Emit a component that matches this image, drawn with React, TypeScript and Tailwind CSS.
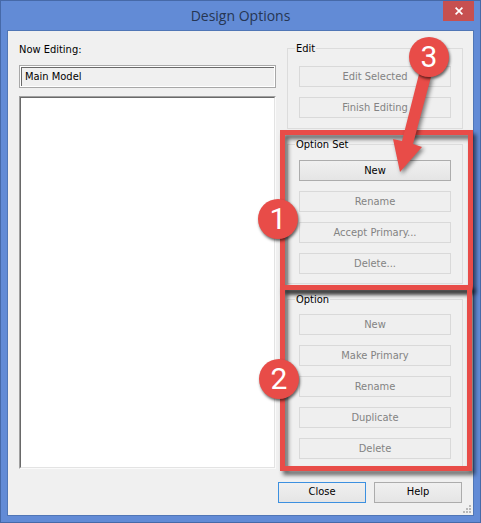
import React, { useState } from "react";
import clsx from "clsx";

interface Action {
    label: string;
    enabled?: boolean;
}

const editActions: Action[] = [{ label: "Edit Selected" }, { label: "Finish Editing" }];

const optionSetActions: Action[] = [
    { label: "New", enabled: true },
    { label: "Rename" },
    { label: "Accept Primary..." },
    { label: "Delete..." },
];

const optionActions: Action[] = [
    { label: "New" },
    { label: "Make Primary" },
    { label: "Rename" },
    { label: "Duplicate" },
    { label: "Delete" },
];

function ActionGroup({ title, actions, className, children }: { title: string; actions: Action[]; className?: string; children?: React.ReactNode }) {
    return (
        <div className="relative">
            <fieldset className={clsx("min-w-0 border border-[#dcdcdc] px-[11px]", className)}>
                <legend className="-ml-1 h-3.5 px-px leading-4 text-black">{title}</legend>
                <div className="flex flex-col gap-2.5">
                    {actions.map((action) => (
                        <button
                            key={action.label}
                            type="button"
                            disabled={!action.enabled}
                            className={clsx(
                                "h-[21px] w-full rounded-none border text-center leading-[19px]",
                                action.enabled
                                    ? "border-[#acacac] bg-linear-to-b from-[#f0f0f0] to-[#e5e5e5] text-black"
                                    : "border-[#d9d9d9] bg-[#efefef] text-[#838383]"
                            )}
                        >
                            {action.label}
                        </button>
                    ))}
                </div>
            </fieldset>
            {children}
        </div>
    );
}

function Highlight({ className }: { className: string }) {
    return (
        <div
            className={clsx(
                "pointer-events-none absolute -top-[7px] -left-[7px] border-5 border-[#e84c48] drop-shadow-[3px_4px_2px_rgba(0,0,0,0.6)]",
                className
            )}
        />
    );
}

function Badge({ value, className }: { value: string; className: string }) {
    return (
        <span
            className={clsx(
                "pointer-events-none absolute z-10 flex size-10 items-center justify-center rounded-full bg-[#e84c48] font-[Roboto,Arial,sans-serif] text-[30px] leading-none text-white shadow-[1px_2px_3px_rgba(0,0,0,0.6)]",
                className
            )}
        >
            {value}
        </span>
    );
}

export default function App() {
    const [model, setModel] = useState("Main Model");

    return (
        <div className="flex min-h-screen flex-col border border-[#4669a8] bg-[#628bd6] px-[6px] pb-[6px] font-['DejaVu_Sans_Condensed',Tahoma,'Noto_Sans',sans-serif] text-[11px]">
            {/* Title bar */}
            <header className="relative flex h-[29px] items-center justify-center">
                <h1 className="font-['Open_Sans','Segoe_UI',sans-serif] text-[14px] text-[#263653]">Design Options</h1>
                <button type="button" aria-label="Close window" className="absolute top-0 right-0 flex h-5 w-[31px] items-center justify-center bg-[#c75050]">
                    <svg width="8" height="8" viewBox="0 0 8 8" stroke="#fff" strokeWidth="1.7">
                        <path d="M.6.6l6.8 6.8M7.4.6L.6 7.4" />
                    </svg>
                </button>
            </header>

            <main className="relative flex flex-1 flex-col border border-[#5076b6] bg-[#f0f0f0] pt-2.5 pr-2.5 pb-3 pl-[11px]">
                <div className="flex flex-1 gap-[11px]">
                    {/* Current model */}
                    <div className="flex min-w-0 flex-1 flex-col">
                        <label htmlFor="model" className="h-6 leading-[18px] text-black">Now Editing:</label>
                        <div className="border border-[#a8a8a8] bg-white p-px">
                            <input
                                id="model"
                                value={model}
                                onChange={(e) => setModel(e.target.value)}
                                className="block h-[19px] w-full border-t border-l border-[#696969] bg-[#f0f0f0] px-[3px] pb-0.5 text-black outline-none"
                            />
                        </div>
                        <div
                            role="listbox"
                            aria-label="Design options"
                            className="mt-2 flex-1 border border-t-[#a0a0a0] border-r-[#fafafa] border-b-[#fafafa] border-l-[#a0a0a0]"
                        >
                            <div className="h-full border border-t-[#696969] border-r-[#e3e3e3] border-b-[#e3e3e3] border-l-[#696969] bg-white" />
                        </div>
                    </div>

                    {/* Commands */}
                    <div className="flex w-[176px] shrink-0 flex-col gap-2">
                        <ActionGroup title="Edit" actions={editActions} className="pt-[11px] pb-2.5" />
                        <ActionGroup title="Option Set" actions={optionSetActions} className="pt-[9px] pb-[9px]">
                            <Highlight className="-right-2.5 -bottom-[6px]" />
                            <svg className="pointer-events-none absolute -top-[67px] right-6 z-10 drop-shadow-[2px_2px_2px_rgba(0,0,0,0.5)]" width="60" height="106" viewBox="0 0 60 106" fill="#e84c48">
                                <path d="M40 4L52 7L34 74L43 77L21 102L14 69L23 71Z" />
                            </svg>
                            <Badge value="3" className="-top-[100px] right-[14px]" />
                            <Badge value="1" className="top-[62px] -left-[29px]" />
                        </ActionGroup>
                        <ActionGroup title="Option" actions={optionActions} className="pt-2 pb-[9px]">
                            <Highlight className="-right-[9px] -bottom-[2px]" />
                            <Badge value="2" className="top-[67px] -left-[28px]" />
                        </ActionGroup>
                    </div>
                </div>

                {/* Footer */}
                <div className="mt-[13px] mr-px flex justify-end gap-2">
                    <button type="button" className="h-[21px] w-[88px] rounded-none border border-[#3c90e0] bg-linear-to-b from-[#f0f0f0] to-[#e5e5e5] text-black">Close</button>
                    <button type="button" className="h-[21px] w-[88px] rounded-none border border-[#acacac] bg-linear-to-b from-[#f0f0f0] to-[#e5e5e5] text-black">Help</button>
                </div>

                <svg className="absolute right-0.5 bottom-0.5" width="8" height="8" viewBox="0 0 8 8" fill="#b8b8b8">
                    <path d="M6 0h2v2h-2zM3 3h2v2h-2zM6 3h2v2h-2zM0 6h2v2h-2zM3 6h2v2h-2zM6 6h2v2h-2z" />
                </svg>
            </main>
        </div>
    );
}
